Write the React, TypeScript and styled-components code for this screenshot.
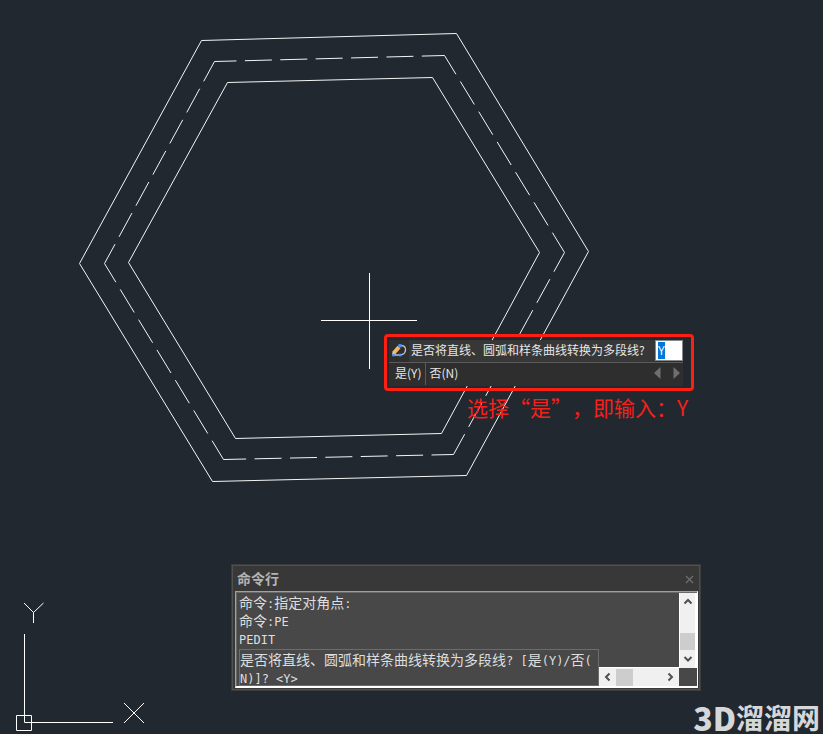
import React, { useEffect, useRef } from "react";
import styled, { createGlobalStyle } from "styled-components";

const GlobalStyle = createGlobalStyle`
  *, *::before, *::after { box-sizing: border-box; }
  body {
    margin: 0;
    background: #212830;
    font-family: "Noto Sans CJK SC", sans-serif;
  }
  button {
    margin: 0;
    padding: 0;
    border: 0;
    background: none;
    color: inherit;
    font: inherit;
    cursor: pointer;
  }
`;

const Workspace = styled.main`
  position: relative;
  min-height: 100vh;
  overflow: hidden;
  background: #212830;
`;

const Drawing = styled.svg`
  position: absolute;
  top: 0;
  left: 0;
  fill: none;
  stroke: #f4f5f6;
  stroke-width: 1;
`;

const UcsIcon = styled.svg`
  position: absolute;
  left: 0;
  bottom: 0;
  fill: none;
  stroke: #ffffff;
`;

const Callout = styled.div`
  position: absolute;
  left: 384px;
  top: 334px;
  padding: 3px 8px 2px 2px;
  border: 3px solid #ff1e12;
  border-radius: 4px;
`;

const Prompt = styled.form`
  width: 294px;
  background: #2e2e2e;
  color: #e6e6e6;
  font-size: 12px;
  line-height: 20px;
`;

const PromptRow = styled.div`
  display: flex;
  height: 23px;
  border-bottom: 1px solid #5a5a5a;
`;

const PromptIcon = styled.svg`
  flex: none;
  width: 20px;
  height: 21px;
`;

const PromptLabel = styled.label`
  flex: 1;
  padding-left: 2px;
  background: #373737;
  white-space: nowrap;
`;

const PromptInput = styled.input`
  width: 28px;
  height: 21px;
  padding: 0 2px;
  border: 1px solid #8a8a8a;
  border-radius: 0;
  outline: none;
  background: #ffffff;
  color: #000000;
  font: 12px/17px "Open Sans", sans-serif;
  caret-color: transparent;
  &::selection { background: #0078d7; color: #ffffff; }
`;

const OptionRow = styled.div`
  display: flex;
  align-items: flex-start;
  height: 23px;
`;

const Option = styled.button`
  height: 22px;
  padding: 0 4px 2px 3px;
  white-space: nowrap;
  & + & { border-left: 1px solid #5a5a5a; }
  &:first-child { padding-left: 6px; }
`;

const Pager = styled.div`
  display: flex;
  gap: 12px;
  margin-left: auto;
  padding: 4px 3px 0 0;
`;

const PagerButton = styled.button`
  display: flex;
  color: #6f6f6f;
`;

const Note = styled.p`
  position: absolute;
  left: 467px;
  top: 392px;
  margin: 0;
  color: #f4211a;
  font-size: 21px;
  line-height: 30px;
  white-space: nowrap;
  text-spacing-trim: space-all;
`;

const CommandWindow = styled.section`
  position: absolute;
  left: 231px;
  top: 564px;
  width: 470px;
  padding: 2px 2px 2px 3px;
  border: 1px solid #3c3c3c;
  background: #383838;
  box-shadow: inset 0 0 0 1px #515151;
`;

const TitleBar = styled.header`
  display: flex;
  align-items: center;
  justify-content: space-between;
  height: 24px;
  padding: 0 4px 0 2px;
`;

const Title = styled.h2`
  margin: 0;
  padding-bottom: 2px;
  color: #b4b4b4;
  font-size: 14px;
  font-weight: 700;
  line-height: 20px;
`;

const CloseButton = styled.button`
  display: flex;
  color: #707070;
`;

const Console = styled.div`
  display: flex;
  height: 97px;
  border: 1px solid #a0a0a0;
  border-right-color: #ffffff;
  border-bottom: 2px solid #ffffff;
  background: #484848;
  box-shadow: inset 1px 1px 0 #696969;
`;

const ConsoleMain = styled.div`
  flex: 1;
  min-width: 0;
  display: flex;
  flex-direction: column;
`;

const Log = styled.div`
  flex: 1;
  padding: 1px 0 0 3px;
`;

const Line = styled.div`
  height: 18px;
  color: #dedede;
  font-size: 14px;
  line-height: 18px;
  white-space: pre;
`;

const Latin = styled.span`
  font-family: "DejaVu Sans Mono", monospace;
  font-size: 12px;
`;

const EntryRow = styled.div`
  display: flex;
  align-items: flex-end;
  height: 37px;
`;

const Entry = styled.div`
  flex: 1;
  height: 37px;
  margin-left: 3px;
  border: 1px solid #6c6c6c;
`;

const HScroll = styled.div`
  display: flex;
  align-items: center;
  width: 80px;
  height: 19px;
  padding-right: 1px;
  border-top: 1px solid #ffffff;
  background: #f0f0f0;
`;

const ScrollColumn = styled.div`
  display: flex;
  flex-direction: column;
  width: 18px;
  padding-top: 1px;
`;

const VScroll = styled.div`
  display: flex;
  flex-direction: column;
  align-items: center;
  height: 75px;
  padding-bottom: 1px;
  border-right: 2px solid #ffffff;
  border-left: 1px solid #ffffff;
  background: #f0f0f0;
`;

const ScrollButton = styled.button`
  flex: none;
  display: flex;
  align-items: center;
  justify-content: center;
  width: 17px;
  height: 17px;
  color: #505050;
`;

const Track = styled.div<{ $vertical?: boolean }>`
  flex: 1;
  display: flex;
  flex-direction: ${(p) => (p.$vertical ? "column" : "row")};
  justify-content: ${(p) => (p.$vertical ? "flex-end" : "flex-start")};
`;

const Thumb = styled.div<{ $vertical?: boolean }>`
  width: ${(p) => (p.$vertical ? 15 : 17)}px;
  height: 17px;
  background: #cdcdcd;
`;

const Watermark = styled.div`
  position: absolute;
  right: 3px;
  bottom: 0;
  display: flex;
  align-items: center;
  height: 34px;
  color: #d6d7d9;
  font-size: 28px;
  font-weight: 700;
  line-height: 34px;
  white-space: nowrap;
`;

const WatermarkPrefix = styled.span`
  font-size: 32px;
  font-weight: 900;
`;

const OUTER = "201.5,40.5 456.5,33.5 588.5,251.5 466.5,475.5 212.5,481.5 79.5,263.5";
const INNER = "227.5,82.5 432.5,77.5 539.5,252.5 441.5,433.5 235.5,438.5 128.5,262.5";
const MIDDLE = [
  [214.5, 61.5],
  [444.5, 55.5],
  [564.5, 252.5],
  [453.5, 454.5],
  [223.5, 459.5],
  [104.5, 263.5],
];

type Direction = "up" | "down" | "left" | "right";

const CHEVRONS: Record<Direction, string> = {
  up: "M1.5 6.5 5 3 8.5 6.5",
  down: "M1.5 3 5 6.5 8.5 3",
  left: "M6.5 1.5 3 5 6.5 8.5",
  right: "M3.5 1.5 7 5 3.5 8.5",
};

function Chevron({ direction }: { direction: Direction }) {
  return (
    <svg width="10" height="10" fill="none" stroke="currentColor" strokeWidth="2">
      <path d={CHEVRONS[direction]} />
    </svg>
  );
}

function Hexagons() {
  return (
    <Drawing width="600" height="490" viewBox="0 0 600 490" aria-hidden="true">
      <polygon points={OUTER} />
      <polygon points={INNER} />
      {MIDDLE.map(([x, y], i) => {
        const [x2, y2] = MIDDLE[(i + 1) % MIDDLE.length];
        return (
          <line key={i} x1={x} y1={y} x2={x2} y2={y2} strokeDasharray="27 8.4" strokeDashoffset="5" />
        );
      })}
      <path d="M321 320.5H417M369.5 273V369" stroke="#ffffff" />
    </Drawing>
  );
}

function DynamicPrompt() {
  const input = useRef<HTMLInputElement>(null);

  useEffect(() => {
    input.current?.focus();
    input.current?.select();
  }, []);

  return (
    <Callout>
      <Prompt onSubmit={(e) => e.preventDefault()}>
        <PromptRow>
          <PromptIcon viewBox="0 0 20 21" fill="none" aria-hidden="true">
            <path d="M12 5.5C17 5.5 17.5 10 15.5 13 14.5 15 12 15 5 15" stroke="#b8c0c8" strokeWidth="1.3" />
            <path d="M4.8 13 10 7" stroke="#f4b860" strokeWidth="4" />
            <path d="m3 15 .8-3.4 2.8 2.8z" fill="#f5ead2" />
            <circle cx="11" cy="5.7" r="1.9" fill="#4592ff" />
            <circle cx="4.5" cy="15" r="1.5" fill="#4592ff" />
            <circle cx="11" cy="15" r="1.5" fill="#4592ff" />
          </PromptIcon>
          <PromptLabel htmlFor="answer">是否将直线、圆弧和样条曲线转换为多段线?</PromptLabel>
          <PromptInput id="answer" ref={input} defaultValue="Y" autoComplete="off" />
        </PromptRow>
        <OptionRow>
          <Option type="button">是(Y)</Option>
          <Option type="button">否(N)</Option>
          <Pager>
            <PagerButton type="button" aria-label="上一项">
              <svg width="7" height="12" fill="currentColor"><path d="M6.5 0v12L0 6z" /></svg>
            </PagerButton>
            <PagerButton type="button" aria-label="下一项">
              <svg width="7" height="12" fill="currentColor"><path d="M.5 0v12L7 6z" /></svg>
            </PagerButton>
          </Pager>
        </OptionRow>
      </Prompt>
    </Callout>
  );
}

function CommandLine() {
  return (
    <CommandWindow aria-label="命令行">
      <TitleBar>
        <Title>命令行</Title>
        <CloseButton type="button" aria-label="关闭">
          <svg width="9" height="9" stroke="currentColor" strokeWidth="1.2">
            <path d="M1 1 8 8M8 1 1 8" />
          </svg>
        </CloseButton>
      </TitleBar>
      <Console>
        <ConsoleMain>
          <Log>
            <Line>命令<Latin>:</Latin>指定对角点<Latin>:</Latin></Line>
            <Line>命令<Latin>:PE</Latin></Line>
            <Line><Latin>PEDIT</Latin></Line>
          </Log>
          <EntryRow>
            <Entry>
              <Line>是否将直线、圆弧和样条曲线转换为多段线<Latin>? [</Latin>是<Latin>(Y)/</Latin>否<Latin>(</Latin></Line>
              <Line><Latin>{"N)]? <Y>"}</Latin></Line>
            </Entry>
            <HScroll>
              <ScrollButton type="button" aria-label="向左滚动"><Chevron direction="left" /></ScrollButton>
              <Track><Thumb /></Track>
              <ScrollButton type="button" aria-label="向右滚动"><Chevron direction="right" /></ScrollButton>
            </HScroll>
          </EntryRow>
        </ConsoleMain>
        <ScrollColumn>
          <VScroll>
            <ScrollButton type="button" aria-label="向上滚动"><Chevron direction="up" /></ScrollButton>
            <Track $vertical><Thumb $vertical /></Track>
            <ScrollButton type="button" aria-label="向下滚动"><Chevron direction="down" /></ScrollButton>
          </VScroll>
        </ScrollColumn>
      </Console>
    </CommandWindow>
  );
}

export default function App() {
  return (
    <>
      <GlobalStyle />
      <Workspace lang="zh-CN">
        <Hexagons />
        <DynamicPrompt />
        <Note>选择“是”，即输入：Y</Note>
        <UcsIcon width="160" height="144" viewBox="0 0 160 144" aria-hidden="true">
          <path d="M24.5 44V132.5H113M16.5 125.5H31.5V140.5H16.5Z" />
          <path d="M24 13 33.5 22.5 43.5 13M33.5 22.5V33M124 113 144 133M144 113 124 133" />
        </UcsIcon>
        <CommandLine />
        <Watermark>
          <WatermarkPrefix>3D</WatermarkPrefix>溜溜网
        </Watermark>
      </Workspace>
    </>
  );
}
